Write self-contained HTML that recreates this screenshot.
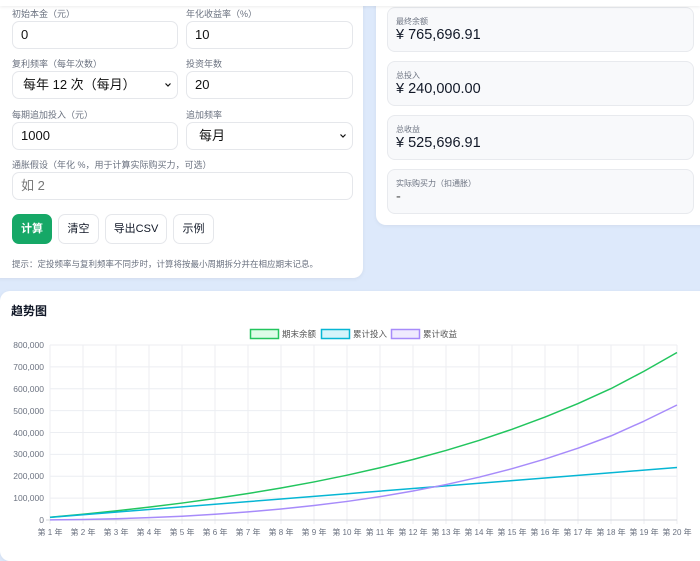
<!DOCTYPE html>
<html><head><meta charset="utf-8"><style>
*{box-sizing:border-box;margin:0;padding:0}
body{width:700px;height:544px;overflow:hidden;background:#dde9fb;font-family:"Liberation Sans","Noto Sans CJK SC",sans-serif;position:relative;color:#111827}
.card{position:absolute;background:#fff;border-radius:10px;box-shadow:0 1px 4px rgba(0,0,0,.06)}
.lbl{position:absolute;font-size:9px;color:#6b7280}
.inp{position:absolute;height:28px;border:1px solid #e5e7eb;border-radius:7px;font-size:13px;padding:0 8px;line-height:26px;color:#111}
.btn{position:absolute;top:214px;height:30px;border:1px solid #e5e7eb;border-radius:7px;font-size:11px;line-height:28px;text-align:center;background:#fff}
.item{position:absolute;left:11px;width:307px;height:45px;background:#f8f9fb;border:1px solid #e8eaee;border-radius:8px}
.item .t{position:absolute;left:8px;top:8px;font-size:8px;color:#6b7280}
.item .v{position:absolute;left:8px;top:19px;font-size:14.5px;color:#111827;font-family:"Liberation Sans",sans-serif}
.chev{position:absolute;right:6px;top:11px}
</style></head><body>
<div class="card" style="left:-10px;top:-20px;width:373px;height:298px"></div>
<div class="lbl" style="left:12px;top:7px">初始本金（元）</div>
<div class="lbl" style="left:186px;top:7px">年化收益率（%）</div>
<div class="inp" style="left:12px;top:21px;width:166px">0</div>
<div class="inp" style="left:186px;top:21px;width:167px">10</div>
<div class="lbl" style="left:12px;top:57px">复利频率（每年次数）</div>
<div class="lbl" style="left:186px;top:57px">投资年数</div>
<div class="inp" style="left:12px;top:71px;width:166px;padding-left:10px">每年 12 次（每月）<svg class="chev" width="6" height="4" viewBox="0 0 6 4"><path d="M0.5 0.5L3 3L5.5 0.5" fill="none" stroke="#111" stroke-width="1.2"/></svg></div>
<div class="inp" style="left:186px;top:71px;width:167px">20</div>
<div class="lbl" style="left:12px;top:108px">每期追加投入（元）</div>
<div class="lbl" style="left:186px;top:108px">追加频率</div>
<div class="inp" style="left:12px;top:122px;width:166px">1000</div>
<div class="inp" style="left:186px;top:122px;width:167px;padding-left:12px">每月<svg class="chev" width="6" height="4" viewBox="0 0 6 4"><path d="M0.5 0.5L3 3L5.5 0.5" fill="none" stroke="#111" stroke-width="1.2"/></svg></div>
<div class="lbl" style="left:12px;top:158px">通胀假设（年化 %，用于计算实际购买力，可选）</div>
<div class="inp" style="left:12px;top:172px;width:341px;color:#777">如 2</div>
<div class="btn" style="left:12px;width:40px;background:#16a867;border-color:#16a867;color:#fff;font-weight:bold">计算</div>
<div class="btn" style="left:58px;width:41px">清空</div>
<div class="btn" style="left:105px;width:62px">导出CSV</div>
<div class="btn" style="left:173px;width:41px">示例</div>
<div class="lbl" style="left:12px;top:258px;font-size:8.5px">提示：定投频率与复利频率不同步时，计算将按最小周期拆分并在相应期末记息。</div>

<div class="card" style="left:376px;top:-20px;width:340px;height:245px">
<div class="item" style="top:27px"><div class="t">最终余额</div><div class="v">¥ 765,696.91</div></div>
<div class="item" style="top:81px"><div class="t">总投入</div><div class="v">¥ 240,000.00</div></div>
<div class="item" style="top:135px"><div class="t">总收益</div><div class="v">¥ 525,696.91</div></div>
<div class="item" style="top:189px"><div class="t">实际购买力（扣通胀）</div><div class="v" style="color:#555">-</div></div>
</div>
<div style="position:absolute;left:0;top:0;width:700px;height:6px;background:#fff;box-shadow:0 1px 3px rgba(0,0,0,.08)"></div>

<div class="card" style="left:0;top:291px;width:710px;height:270px"></div>
<div style="position:absolute;left:11px;top:302px;font-size:12px;font-weight:bold">趋势图</div>
<svg style="position:absolute;left:0;top:0" width="700" height="544" font-family="Liberation Sans,Noto Sans CJK SC,sans-serif">
<g stroke="#eceef2" stroke-width="1">
<line x1="50" y1="345" x2="677" y2="345"/><line x1="50" y1="366.9" x2="677" y2="366.9"/><line x1="50" y1="388.75" x2="677" y2="388.75"/><line x1="50" y1="410.6" x2="677" y2="410.6"/><line x1="50" y1="432.5" x2="677" y2="432.5"/><line x1="50" y1="454.4" x2="677" y2="454.4"/><line x1="50" y1="476.25" x2="677" y2="476.25"/><line x1="50" y1="498.1" x2="677" y2="498.1"/>
<line x1="50" y1="345" x2="50" y2="524"/><line x1="83" y1="345" x2="83" y2="524"/><line x1="116" y1="345" x2="116" y2="524"/><line x1="149" y1="345" x2="149" y2="524"/><line x1="182" y1="345" x2="182" y2="524"/><line x1="215" y1="345" x2="215" y2="524"/><line x1="248" y1="345" x2="248" y2="524"/><line x1="281" y1="345" x2="281" y2="524"/><line x1="314" y1="345" x2="314" y2="524"/><line x1="347" y1="345" x2="347" y2="524"/><line x1="380" y1="345" x2="380" y2="524"/><line x1="413" y1="345" x2="413" y2="524"/><line x1="446" y1="345" x2="446" y2="524"/><line x1="479" y1="345" x2="479" y2="524"/><line x1="512" y1="345" x2="512" y2="524"/><line x1="545" y1="345" x2="545" y2="524"/><line x1="578" y1="345" x2="578" y2="524"/><line x1="611" y1="345" x2="611" y2="524"/><line x1="644" y1="345" x2="644" y2="524"/><line x1="677" y1="345" x2="677" y2="524"/>
</g>
<line x1="46" y1="520" x2="677" y2="520" stroke="#d4d7dd"/>
<g font-size="8.5" fill="#6b7280" text-anchor="end">
<text x="44" y="348">800,000</text><text x="44" y="370">700,000</text><text x="44" y="392">600,000</text><text x="44" y="414">500,000</text><text x="44" y="436">400,000</text><text x="44" y="457">300,000</text><text x="44" y="479">200,000</text><text x="44" y="501">100,000</text><text x="44" y="523">0</text>
</g>
<g font-size="8" fill="#6b7280" text-anchor="middle">
<text x="50" y="535">第 1 年</text><text x="83" y="535">第 2 年</text><text x="116" y="535">第 3 年</text><text x="149" y="535">第 4 年</text><text x="182" y="535">第 5 年</text><text x="215" y="535">第 6 年</text><text x="248" y="535">第 7 年</text><text x="281" y="535">第 8 年</text><text x="314" y="535">第 9 年</text><text x="347" y="535">第 10 年</text><text x="380" y="535">第 11 年</text><text x="413" y="535">第 12 年</text><text x="446" y="535">第 13 年</text><text x="479" y="535">第 14 年</text><text x="512" y="535">第 15 年</text><text x="545" y="535">第 16 年</text><text x="578" y="535">第 17 年</text><text x="611" y="535">第 18 年</text><text x="644" y="535">第 19 年</text><text x="677" y="535">第 20 年</text>
</g>
<g fill="none" stroke-width="1.5" stroke-linejoin="round">
<polyline stroke="#22c55e" points="50,517.25 83,514.21 116,510.86 149,507.15 182,503.06 215,498.54 248,493.54 281,488.02 314,481.93 347,475.19 380,467.75 413,459.53 446,450.45 479,440.42 512,429.34 545,417.1 578,403.57 611,388.62 644,371.25 677,352.5"/>
<polyline stroke="#06b6d4" points="50,517.38 83,514.75 116,512.13 149,509.5 182,506.88 215,504.25 248,501.63 281,499 314,496.38 347,493.75 380,491.13 413,488.5 446,485.88 479,483.25 512,480.63 545,478 578,475.38 611,472.75 644,470.13 677,467.5"/>
<polyline stroke="#a78bfa" points="50,519.88 83,519.46 116,518.74 149,517.65 182,516.19 215,514.29 248,511.92 281,509.02 314,505.55 347,501.44 380,496.62 413,491.03 446,484.57 479,477.17 512,468.71 545,459.09 578,448.19 611,435.88 644,421.13 677,405"/>
</g>
<rect x="250.5" y="329.5" width="28" height="9" fill="#dcfce7" stroke="#22c55e" stroke-width="1.5"/>
<text x="282" y="337" font-size="8.5" fill="#555">期末余额</text>
<rect x="321.5" y="329.5" width="28" height="9" fill="#d5f4fa" stroke="#06b6d4" stroke-width="1.5"/>
<text x="353" y="337" font-size="8.5" fill="#555">累计投入</text>
<rect x="391.5" y="329.5" width="28" height="9" fill="#efeafe" stroke="#a78bfa" stroke-width="1.5"/>
<text x="423" y="337" font-size="8.5" fill="#555">累计收益</text>
</svg>
</body></html>
